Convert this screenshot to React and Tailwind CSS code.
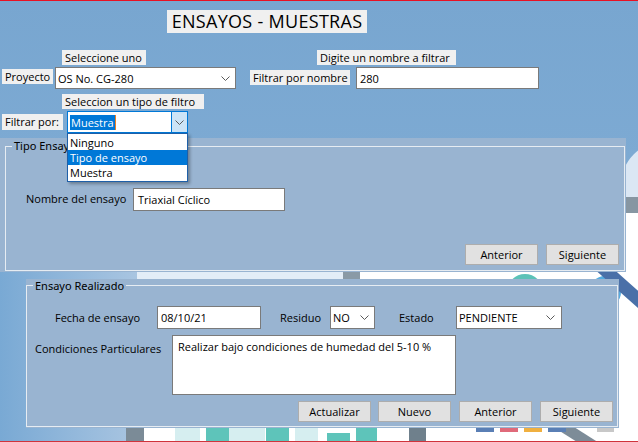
import React from "react";

const Chevron = ({ className = "" }) => (
  <svg width="9" height="5" viewBox="0 0 9 5" className={className}>
    <polyline points="0.5,0.5 4.5,4.5 8.5,0.5" fill="none" stroke="#5a5a5a" strokeWidth="1" />
  </svg>
);

const Label = ({ children, className = "" }) => (
  <div className={`bg-[#f0f0f0] px-[3px] leading-[15px] h-[15px] whitespace-nowrap ${className}`}>{children}</div>
);

const Btn = ({ children, className = "" }) => (
  <div className={`h-[21px] bg-[#e1e1e1] border border-[#adadad] flex items-center justify-center leading-[15px] ${className}`}>{children}</div>
);

const Background = () => (
  <svg className="absolute inset-0" width="638" height="442" viewBox="0 0 638 442">
    <defs>
      <linearGradient id="lb" x1="0" y1="0" x2="1" y2="0">
        <stop offset="0" stopColor="#79a9d4" />
        <stop offset="1" stopColor="#a9c5e1" />
      </linearGradient>
    </defs>
    <rect x="0" y="272" width="137" height="170" fill="url(#lb)" />
    <rect x="137" y="271" width="501" height="171" fill="#ffffff" />
    <rect x="137" y="271" width="206" height="8" fill="#e3edf7" />
    <rect x="343" y="271" width="17" height="8" fill="#8a9aa6" />
    <circle cx="525" cy="292" r="18" fill="#5cc2b8" />
    <circle cx="605" cy="292" r="16" fill="#55ace0" />
    <circle cx="668" cy="188" r="48" fill="#dbe7f4" />
    <rect x="610" y="197" width="28" height="16" fill="#8796a2" />
    <rect x="626" y="213" width="12" height="58" fill="#ffffff" />
    <line x1="596" y1="262" x2="668" y2="326" stroke="#4a70a8" strokeWidth="13" />
    <line x1="540" y1="412" x2="600" y2="450" stroke="#7d8c98" strokeWidth="11" />
    <rect x="126" y="428" width="18" height="14" fill="#7b8b97" />
    <rect x="175" y="428" width="25" height="14" fill="#d6eef0" />
    <rect x="206" y="428" width="23" height="14" fill="#5ec4ba" />
    <rect x="229" y="428" width="36" height="14" fill="#d6eef0" />
    <rect x="266" y="428" width="23" height="14" fill="#5ec4ba" />
    <rect x="295" y="428" width="23" height="14" fill="#d6eef0" />
    <rect x="327" y="433" width="23" height="9" fill="#5ec4ba" />
    <rect x="356" y="428" width="21" height="14" fill="#5ec4ba" />
    <rect x="409" y="428" width="17" height="14" fill="#6f808c" />
    <rect x="476" y="428" width="18" height="4" fill="#5a7fb5" />
    <rect x="500" y="428" width="18" height="4" fill="#e06a7a" />
    <rect x="524" y="428" width="18" height="4" fill="#f0b040" />
    <rect x="548" y="428" width="18" height="4" fill="#5a7fb5" />
    <rect x="597" y="428" width="17" height="4" fill="#c8c8c8" />
  </svg>
);

export default function App() {
  return (
    <div className="relative w-[638px] h-[442px] overflow-hidden bg-gradient-to-b from-[#78a6d0] to-[#86b1d8] font-['Open_Sans',sans-serif] text-[11px] text-black flex flex-col">
      <Background />
      <div className="relative h-px bg-[#e81123]" />
      <div className="relative flex flex-col">
        {/* Title */}
        <div className="mt-[9px] ml-[167px] w-[200px] h-[23px] bg-[#f0f0f0] flex items-center justify-center text-[18px] font-medium leading-[23px] tracking-[0.3px]">
          ENSAYOS - MUESTRAS
        </div>

        {/* helper labels row */}
        <div className="mt-[17px] flex h-[14px]">
          <Label className="ml-[62px] w-[84px] h-[14px] leading-[14px]">Seleccione uno</Label>
          <Label className="ml-[171px] w-[139px] h-[14px] leading-[14px]">Digite un nombre a filtrar</Label>
        </div>

        {/* Proyecto row */}
        <div className="mt-[3px] flex items-start h-[22px]">
          <Label className="ml-[2px] mt-[2px] w-[51px]">Proyecto</Label>
          <div className="ml-[2px] w-[181px] h-[22px] bg-white border border-[#7a7a7a] flex items-center pl-[2px] pr-[5px]">
            <span className="flex-1 leading-[15px]">OS No. CG-280</span>
            <Chevron />
          </div>
          <Label className="ml-[14px] mt-[3px] w-[100px]">Filtrar por nombre</Label>
          <div className="ml-[6px] w-[183px] h-[22px] bg-white border border-[#7a7a7a] flex items-center pl-[3px] leading-[15px]">
            280
          </div>
        </div>

        {/* Seleccion tipo filtro */}
        <div className="mt-[5px] flex h-[14px]">
          <Label className="ml-[62px] w-[142px] h-[14px] leading-[14px]">Seleccion un tipo de filtro</Label>
        </div>

        {/* Filtrar por row */}
        <div className="mt-[3px] flex items-start h-[22px] relative z-20">
          <Label className="ml-[2px] mt-[3px] w-[61px] h-[16px] leading-[16px]">Filtrar por:</Label>
          <div className="relative ml-[4px] w-[121px] h-[22px]">
            <div className="w-full h-full bg-white border border-[#0078d7] flex">
              <div className="flex-1 flex items-center pl-[2px]">
                <span className="bg-[#0078d7] text-white leading-[15px] px-px">Muestra</span>
                <span className="w-px h-[15px] bg-[#f08020]" />
              </div>
              <div className="w-[16px] h-full bg-[#cce4f7] border-l border-[#0078d7] flex items-center justify-center">
                <Chevron />
              </div>
            </div>
            <div className="absolute left-0 top-full w-[121px] bg-white border border-[#1e5fa8] shadow-[2px_2px_3px_rgba(0,0,0,0.3)] flex flex-col py-px">
              <div className="h-[15px] leading-[15px] pl-[2px]">Ninguno</div>
              <div className="h-[15px] leading-[15px] pl-[2px] bg-[#0078d7] text-white">Tipo de ensayo</div>
              <div className="h-[15px] leading-[15px] pl-[2px]">Muestra</div>
            </div>
          </div>
        </div>

        {/* Group 1: Tipo Ensayo */}
        <div className="mt-[5px] w-[626px] h-[134px] bg-[#99b4d1] pl-[5px] pr-px pb-px pt-[1px] relative z-10">
          <fieldset className="h-full border border-[#e6ecf2] flex flex-col">
            <legend className="ml-[6px] px-[2px] text-[11px] leading-[14px] font-['Noto_Sans',sans-serif]">Tipo Ensayo</legend>
            <div className="mt-[35px] flex items-start">
              <div className="ml-[20px] w-[107px] mt-[3px] leading-[15px]">Nombre del ensayo</div>
              <div className="w-[152px] h-[23px] bg-white border border-[#7a7a7a] flex items-center pl-[4px] leading-[15px]">
                Triaxial Cíclico
              </div>
            </div>
            <div className="mt-auto mb-[5px] flex justify-end gap-[8px] pr-[5px]">
              <Btn className="w-[73px]">Anterior</Btn>
              <Btn className="w-[73px]">Siguiente</Btn>
            </div>
          </fieldset>
        </div>

        {/* Group 2: Ensayo Realizado */}
        <div className="mt-[7px] ml-[26px] w-[593px] h-[149px] bg-[#99b4d1] pr-px pb-px relative z-10">
          <fieldset className="h-full border border-[#e6ecf2] flex flex-col">
            <legend className="ml-[6px] px-[2px] text-[11px] leading-[13px] font-['Noto_Sans',sans-serif]">Ensayo Realizado</legend>
            <div className="mt-[14px] flex items-center h-[23px]">
              <div className="ml-[28px] w-[102px] leading-[15px]">Fecha de ensayo</div>
              <div className="w-[104px] h-[23px] bg-white border border-[#7a7a7a] flex items-center pl-[3px] leading-[15px]">08/10/21</div>
              <div className="ml-[19px] w-[50px] leading-[15px]">Residuo</div>
              <div className="w-[45px] h-[23px] bg-white border border-[#7a7a7a] flex items-center pl-[2px] pr-[5px]">
                <span className="flex-1 leading-[15px]">NO</span>
                <Chevron />
              </div>
              <div className="ml-[24px] w-[57px] leading-[15px]">Estado</div>
              <div className="w-[106px] h-[23px] bg-white border border-[#7a7a7a] flex items-center pl-[2px] pr-[6px]">
                <span className="flex-1 leading-[15px]">PENDIENTE</span>
                <Chevron />
              </div>
            </div>
            <div className="mt-[6px] flex items-start">
              <div className="ml-[8px] w-[137px] mt-[6px] leading-[15px] whitespace-nowrap">Condiciones Particulares</div>
              <div className="w-[284px] h-[60px] bg-white border border-[#7a7a7a] pl-[5px] pt-[3px] leading-[15px]">
                Realizar bajo condiciones de humedad del 5-10 %
              </div>
            </div>
            <div className="mt-[6px] flex items-center">
              <Btn className="ml-[271px] w-[73px]">Actualizar</Btn>
              <Btn className="ml-[7px] w-[73px]">Nuevo</Btn>
              <Btn className="ml-[8px] w-[73px]">Anterior</Btn>
              <Btn className="ml-[8px] w-[73px]">Siguiente</Btn>
            </div>
          </fieldset>
        </div>
      </div>
      <div className="relative mt-auto h-px bg-[#d0343c]" />
    </div>
  );
}
